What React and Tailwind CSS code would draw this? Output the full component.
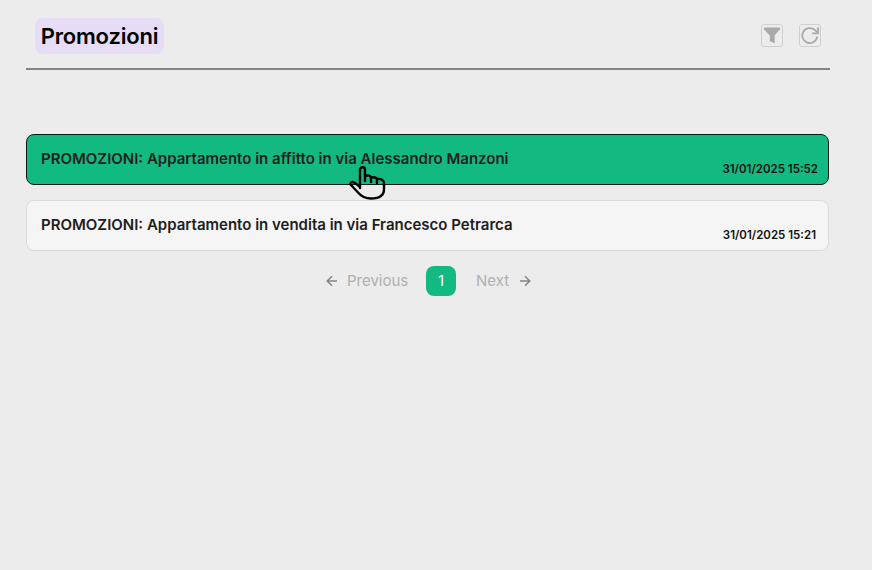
import React from "react";

const promotions = [
  {
    title: "PROMOZIONI: Appartamento in affitto in via Alessandro Manzoni",
    date: "31/01/2025 15:52",
    active: true,
  },
  {
    title: "PROMOZIONI: Appartamento in vendita in via Francesco Petrarca",
    date: "31/01/2025 15:21",
    active: false,
  },
];

function FilterIcon() {
  return (
    <svg width="18" height="18" viewBox="0 0 18 18" fill="#a9a9a9">
      <path d="M1 .5h16v1.8l-5.4 6.2v8L6.8 14V8.500L1 2.300z" />
    </svg>
  );
}

function ReloadIcon() {
  return (
    <svg width="20" height="20" viewBox="0 0 20 20" fill="none" stroke="#a9a9a9" strokeWidth="1.8">
      <path d="M17.200 10.500a7.500 7.500 0 1 1-2.200-6.300L17 6.200" />
      <path d="M18 1.500v5.800h-5.800" />
    </svg>
  );
}

function HandCursor() {
  return (
    <svg
      className="pointer-events-none absolute left-[348px] top-[165px]"
      width="38"
      height="36"
      viewBox="0 0 38 36"
      fill="none"
      stroke="#000"
      strokeWidth="2.4"
      strokeLinejoin="round"
      strokeLinecap="round"
    >
      <path d="M12 23V4.500c0-3 5-3 5 0V16M17 11c3-1 6-.5 6 2v4M23 12.500c3-.7 6 0 6 2V18M29 14c4-.5 7 1 7 4v6c0 6-4 9.500-13 9.500-7 0-10-2.500-13-6l-6-6.500c-4-3 0-5 3-3l5 4" />
    </svg>
  );
}

function Arrow({ flip }) {
  return (
    <svg
      className={flip ? "rotate-180" : ""}
      width="12"
      height="12"
      viewBox="0 0 12 12"
      fill="none"
      stroke="#858585"
      strokeWidth="1.5"
    >
      <path d="M11 6H1.500M6 1.200L1.200 6 6 10.800" />
    </svg>
  );
}

export default function App() {
  return (
    <main className="relative h-[570px] w-[872px] overflow-hidden bg-[#ececec] pl-[26px] pr-[42px] pt-[18px] font-['Inter',sans-serif]">
      <header className="flex h-[52px] items-start justify-between border-b-2 border-[#858585] pl-[9px] pr-[9px]">
        <h1 className="flex h-9 w-[129px] items-center justify-center whitespace-nowrap rounded-lg bg-[#e6dcf6] text-[22px] font-semibold tracking-[-0.2px] text-black">
          Promozioni
        </h1>
        <div className="mt-1.5 flex gap-4">
          <button className="flex h-[23px] w-[22px] items-center justify-center rounded-[3px] border border-[#cfcfcf]">
            <FilterIcon />
          </button>
          <button className="flex h-[23px] w-[22px] items-center justify-center rounded-[3px] border border-[#cfcfcf]">
            <ReloadIcon />
          </button>
        </div>
      </header>
      <section className="mr-px mt-16 flex flex-col gap-[15px]">
        {promotions.map((item) => (
          <article
            key={item.date}
            className={`flex h-[51px] items-center justify-between rounded-lg border pl-3.5 ${
              item.active ? "border-[#0b1b15] bg-[#12b981] pr-2.5" : "border-[#dadada] bg-[#f5f5f5] pr-3"
            }`}
          >
            <h2 className="whitespace-nowrap text-[15px] font-semibold text-[#202020]">{item.title}</h2>
            <time className="mt-5 whitespace-nowrap text-[11.500px] font-semibold text-[#101010]">{item.date}</time>
          </article>
        ))}
      </section>
      <nav className="mt-[15px] flex h-[30px] items-center pl-[300px] text-[15px] text-[#afafaf]">
        <Arrow />
        <span className="ml-[9px] w-[79px]">Previous</span>
        <span className="flex h-[30px] w-[30px] items-center justify-center rounded-lg bg-[#12b981] text-white">1</span>
        <span className="ml-5 w-[43px]">Next</span>
        <Arrow flip />
      </nav>
      <HandCursor />
    </main>
  );
}
